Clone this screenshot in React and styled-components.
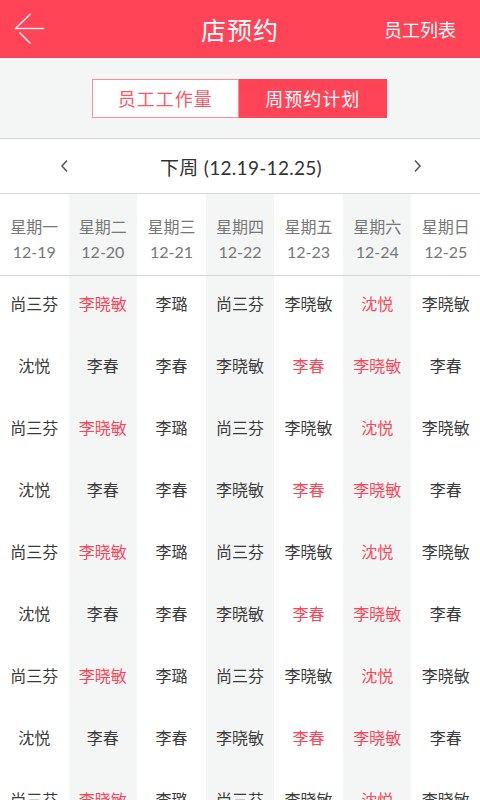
import React from 'react';
import styled, { createGlobalStyle } from 'styled-components';

const RED = '#fe4456';
const SHADE = '#f4f5f5';

const GlobalStyle = createGlobalStyle`
  html, body {
    margin: 0;
    padding: 0;
    background: #fff;
    font-family: Lato, "Noto Sans CJK SC", "Noto Sans", sans-serif;
  }
`;

const Page = styled.div`
  width: 480px;
  height: 800px;
  overflow: hidden;
  background: #fff;
`;

const TopBar = styled.header`
  height: 58px;
  background: ${RED};
  display: grid;
  grid-template-columns: 1fr auto 1fr;
  align-items: center;
  color: #fff;
`;

const BackButton = styled.div`
  padding-left: 14px;
  display: flex;
  align-items: center;
`;

const Title = styled.h1`
  margin: 0;
  font-size: 25px;
  font-weight: normal;
  letter-spacing: 1px;
`;

const HeaderLink = styled.div`
  justify-self: end;
  padding-right: 24px;
  font-size: 18px;
`;

const TabBand = styled.div`
  height: 80px;
  background: ${SHADE};
  border-bottom: 1px solid #d6d6d6;
  display: flex;
  align-items: center;
  justify-content: center;
`;

const Segmented = styled.div`
  display: flex;
  height: 39px;
  width: 295px;
  margin-left: -2px;
`;

const Segment = styled.div`
  flex: 1;
  display: flex;
  align-items: center;
  justify-content: center;
  font-size: 18px;
  letter-spacing: 1px;
  box-sizing: border-box;
  border: 1px solid ${({ active }) => (active ? RED : '#ff8d97')};
  background: ${({ active }) => (active ? RED : '#fff')};
  color: ${({ active }) => (active ? '#fff' : '#ff5566')};
`;

const WeekNav = styled.div`
  height: 54px;
  border-bottom: 1px solid #d6d6d6;
  display: flex;
  align-items: center;
  justify-content: space-between;
  padding: 0 58px 0 60px;
  font-size: 19px;
  color: #333;
`;

const WeekLabel = styled.span`
  letter-spacing: 0.3px;
`;

const Chevron = styled.svg`
  width: 9px;
  height: 14px;
`;

const Schedule = styled.div`
  display: flex;
`;

const Column = styled.div`
  flex: 1;
  background: ${({ shaded }) => (shaded ? SHADE : '#fff')};
  display: flex;
  flex-direction: column;
  align-items: stretch;
`;

const DayHead = styled.div`
  height: 82px;
  box-sizing: border-box;
  padding-top: 20px;
  border-bottom: 1px solid #d6d6d6;
  text-align: center;
  font-size: 16px;
  line-height: 25px;
  color: #777;
`;

const Cell = styled.div`
  height: 62px;
  box-sizing: border-box;
  padding-top: 16px;
  text-align: center;
  font-size: 16px;
  line-height: 24px;
  color: ${({ hot }) => (hot ? RED : '#3a3a3a')};
  white-space: nowrap;
`;

const days = [
  ['星期一', '12-19'],
  ['星期二', '12-20'],
  ['星期三', '12-21'],
  ['星期四', '12-22'],
  ['星期五', '12-23'],
  ['星期六', '12-24'],
  ['星期日', '12-25'],
];

// two alternating rows, [name, highlighted]
const rowA = [
  ['尚三芬', false], ['李晓敏', true], ['李璐', false], ['尚三芬', false],
  ['李晓敏', false], ['沈悦', true], ['李晓敏', false],
];
const rowB = [
  ['沈悦', false], ['李春', false], ['李春', false], ['李晓敏', false],
  ['李春', true], ['李晓敏', true], ['李春', false],
];
const rows = [rowA, rowB, rowA, rowB, rowA, rowB, rowA, rowB, rowA];

const BackArrow = () => (
  <svg width="32" height="32" viewBox="0 0 32 32">
    <g stroke="#fff" strokeWidth="1.3" fill="none" strokeLinecap="square">
      <line x1="1.5" y1="15.5" x2="29.5" y2="15.5" />
      <line x1="1.5" y1="15.5" x2="16" y2="1.5" />
      <line x1="6" y1="20" x2="16" y2="30" />
    </g>
  </svg>
);

const App = () => (
  <Page>
    <GlobalStyle />
    <TopBar>
      <BackButton>
        <BackArrow />
      </BackButton>
      <Title>店预约</Title>
      <HeaderLink>员工列表</HeaderLink>
    </TopBar>

    <TabBand>
      <Segmented>
        <Segment>员工工作量</Segment>
        <Segment active>周预约计划</Segment>
      </Segmented>
    </TabBand>

    <WeekNav>
      <Chevron viewBox="0 0 9 14">
        <polyline points="7,1.5 2,7 7,12.5" stroke="#555" strokeWidth="1.5" fill="none" />
      </Chevron>
      <WeekLabel>下周 (12.19-12.25)</WeekLabel>
      <Chevron viewBox="0 0 9 14">
        <polyline points="2,1.5 7,7 2,12.5" stroke="#555" strokeWidth="1.5" fill="none" />
      </Chevron>
    </WeekNav>

    <Schedule>
      {days.map(([week, date], col) => (
        <Column key={date} shaded={col % 2 === 1}>
          <DayHead>
            {week}
            <br />
            {date}
          </DayHead>
          {rows.map((row, r) => (
            <Cell key={r} hot={row[col][1]}>
              {row[col][0]}
            </Cell>
          ))}
        </Column>
      ))}
    </Schedule>
  </Page>
);

export default App;
